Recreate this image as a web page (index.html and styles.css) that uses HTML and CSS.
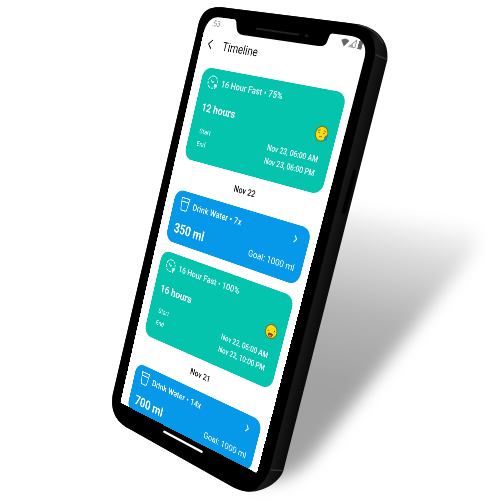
FILE: index.html
```html
<!DOCTYPE html>
<html lang="en">
<head>
<meta charset="utf-8">
<meta name="viewport" content="width=device-width, initial-scale=1">
<title>Timeline</title>
<link rel="stylesheet" href="styles.css">
</head>
<body>
<svg class="symbols" aria-hidden="true">
  <symbol id="fast" viewBox="0 0 24 24">
    <g fill="none" stroke="currentColor" stroke-width="1.8" stroke-linejoin="round">
      <path d="M12 1.500a10.500 10.500 0 0 1 10 13" stroke-dasharray="4 2"/>
      <path d="M12 1.500a10.500 10.500 0 1 0 3 20.500" stroke-dasharray="6 2"/>
      <path d="M7 9l5 4 2-2M19.500 15v8M17 15v4h5v-4"/>
    </g>
  </symbol>
  <symbol id="cup" viewBox="0 0 24 26">
    <g fill="none" stroke="currentColor" stroke-width="1.8" stroke-linejoin="round">
      <path d="M2 1h20l-2.500 21q-.2 3-3 3h-9q-2.800 0-3-3zM3 8h18"/>
    </g>
  </symbol>
  <symbol id="next" viewBox="0 0 8 14">
    <path d="M1 1l5 6-5 6" fill="none" stroke="currentColor" stroke-width="2"/>
  </symbol>
</svg>
<main class="stage">
  <svg class="layer" viewBox="0 0 1500 1500" aria-hidden="true">
    <defs>
      <linearGradient id="shade" gradientUnits="userSpaceOnUse" x1="1100" y1="620" x2="1000" y2="1150">
        <stop offset="0" stop-color="#fcfcfc"/><stop offset=".2" stop-color="#dedede"/><stop offset=".6" stop-color="#b4b4b4"/><stop offset="1" stop-color="#a2a2a2"/>
      </linearGradient>
      <linearGradient id="side" gradientUnits="userSpaceOnUse" x1="940" y1="740" x2="1010" y2="758">
        <stop offset="0" stop-color="#050505"/><stop offset=".4" stop-color="#1c1c1c"/><stop offset="1" stop-color="#0c0c0c"/>
      </linearGradient>
      <filter id="soft" x="-30%" y="-30%" width="160%" height="160%"><feGaussianBlur stdDeviation="24"/></filter>
    </defs>
    <path d="M980 620L1400 680Q1460 690 1410 770L930 1380Q850 1460 760 1440z" fill="url(#shade)" filter="url(#soft)"/>
    <path d="M420 1270L740 1450L800 1430L720 1300z" fill="#dedede" filter="url(#soft)"/>
    <path d="M592 90C600 45 615 18 665 22L1070 72C1130 82 1168 120 1162 180L852 1405C844 1445 790 1478 745 1475Q725 1474 700 1462L385 1285C355 1268 330 1240 338 1185z" fill="url(#side)"/>
    <path d="M1072 74Q1130 88 1148 130M1127 164L1160 178M812 1410L850 1412" fill="none" stroke="#333" stroke-width="4"/>
    <path d="M1060 508l10 4-34 130-12-3z" fill="#000"/>
  </svg>

  <section class="screen">
    <div class="status">
      <span>:53</span>
      <svg class="signals" viewBox="0 0 46 16" aria-hidden="true">
        <path d="M0 4Q8-2 16 4L8 14z" fill="#666"/>
        <path d="M30 1v12H18z" fill="none" stroke="#888" stroke-width="1.500"/><path d="M24 8l3 5h-9z" fill="#aaa"/>
        <path d="M35 2h2V0h4v2h2v13h-8z" fill="#666"/>
      </svg>
    </div>
    <header class="bar">
      <button class="back" aria-label="Back">
        <svg viewBox="0 0 10 18" aria-hidden="true"><path d="M9 1L1 9l8 8" fill="none" stroke="currentColor" stroke-width="2"/></svg>
      </button>
      <h1>Timeline</h1>
    </header>

    <div class="feed">
      <article class="card fast">
        <h2><svg class="icon" aria-hidden="true"><use href="#fast"/></svg>16 Hour Fast • 75%</h2>
        <div class="amount">
          <strong>12 hours</strong>
          <svg class="face" viewBox="0 0 28 28" aria-hidden="true">
            <circle cx="14" cy="14" r="12.500" fill="#fbdc14" stroke="#6f7a1c" stroke-width="2"/>
            <path d="M6 10l4-2M18 8l4 2M7 13h3M17 13h3M11 20q3-2 6 0" fill="none" stroke="#7a6414" stroke-width="1.500"/>
            <path d="M24 15q-4 5-2 8 3 2 5-1 0-3-3-7z" fill="#248fd5" stroke="#31677b" stroke-width=".7"/>
          </svg>
        </div>
        <dl>
          <div><dt>Start</dt><dd>Nov 23, 06:00 AM</dd></div>
          <div><dt>End</dt><dd>Nov 23, 06:00 PM</dd></div>
        </dl>
      </article>

      <p class="day">Nov 22</p>

      <article class="card water">
        <h2><svg class="icon" aria-hidden="true"><use href="#cup"/></svg>Drink Water • 7x<svg class="next" aria-hidden="true"><use href="#next"/></svg></h2>
        <div class="amount"><strong>350 ml</strong><span>Goal: 1000 ml</span></div>
      </article>

      <article class="card fast">
        <h2><svg class="icon" aria-hidden="true"><use href="#fast"/></svg>16 Hour Fast • 100%</h2>
        <div class="amount">
          <strong>16 hours</strong>
          <svg class="face" viewBox="0 0 28 28" aria-hidden="true">
            <circle cx="14" cy="14" r="12.500" fill="#fbdc14" stroke="#6f7a1c" stroke-width="2"/>
            <circle cx="7" cy="14" r="1.200" fill="#4d3b0c"/><circle cx="21" cy="12" r="1.200" fill="#4d3b0c"/>
            <path d="M8 18q6-2 12 0-1 7-6 7t-6-7z" fill="#8d4a22"/><path d="M11 22q3-3 6 0-3 3-6 0z" fill="#f2897d"/>
          </svg>
        </div>
        <dl>
          <div><dt>Start</dt><dd>Nov 22, 06:00 AM</dd></div>
          <div><dt>End</dt><dd>Nov 22, 10:00 PM</dd></div>
        </dl>
      </article>

      <p class="day">Nov 21</p>

      <article class="card water">
        <h2><svg class="icon" aria-hidden="true"><use href="#cup"/></svg>Drink Water • 14x<svg class="next" aria-hidden="true"><use href="#next"/></svg></h2>
        <div class="amount"><strong>700 ml</strong><span>Goal: 1000 ml</span></div>
      </article>
    </div>
  </section>

  <svg class="layer" viewBox="0 0 1500 1500" aria-hidden="true">
    <!-- front glass with the screen opening and notch -->
    <path fill="#000" fill-rule="evenodd" d="M592 90C600 45 615 18 665 22L1050 70C1105 80 1133 120 1124 170L812 1400C800 1445 765 1475 740 1474Q725 1474 700 1462L385 1285C355 1268 330 1240 338 1185z
      M602 135C608 100 620 50 655 52L700 57Q709 58 709 68L710 84Q711 102 728 105L955 138Q974 140 980 128L988 108Q991 99 1002 101L1050 107C1090 112 1101 140 1094 172L776 1410Q773 1421 763 1416L368 1214Q360 1210 362 1200z"/>
    <path d="M770 86L895 104" stroke="#222" stroke-width="5" stroke-linecap="round"/>
    <circle cx="920" cy="107" r="5" fill="#1b1b1f"/>
    <path d="M493 1295L605 1355" stroke="#fff" stroke-width="7" stroke-linecap="round"/>
  </svg>
</main>
</body>
</html>
```
FILE: styles.css
```css
* {
  box-sizing: border-box;
  margin: 0;
}

body {
  background: #fff;
  font-family: Roboto, "Liberation Sans", sans-serif;
}

.symbols {
  position: absolute;
  width: 0;
  height: 0;
}

.stage {
  position: relative;
  width: 500px;
  aspect-ratio: 1;
  margin: 0 auto;
  overflow: hidden;
}

.layer {
  position: absolute;
  inset: 0;
  width: 100%;
  height: 100%;
  pointer-events: none;
}

/* The flat app screen, seen in the phone's perspective. */
.screen {
  position: absolute;
  top: 0;
  left: 0;
  width: 360px;
  height: 780px;
  overflow: hidden;
  background: #fff;
  color: #111;
  transform-origin: 0 0;
  transform: matrix3d(0.32481, 0.050722, 0, -0.00034361, -0.097974, 0.542077, 0, 0.00011276, 0, 0, 1, 0, 207.3, 15.3, 0, 1);
}

.status {
  display: flex;
  align-items: center;
  justify-content: space-between;
  height: 26px;
  padding: 0 8px 0 16px;
  color: #777;
  font-size: 15px;
}

.signals {
  width: 46px;
  height: 16px;
}

.bar {
  display: flex;
  align-items: center;
  gap: 26px;
  height: 50px;
  padding: 0 18px;
}

.back {
  display: flex;
  padding: 0;
  border: 0;
  background: none;
  color: inherit;
}

.back svg {
  width: 10px;
  height: 18px;
}

h1 {
  font-size: 22px;
  font-weight: 400;
}

.feed {
  display: flex;
  flex-direction: column;
  gap: 20px;
  padding: 17px 16px 0 21px;
}

.card {
  padding: 12px 16px 14px;
  border-radius: 20px;
  color: #fff;
}

.fast {
  background: #04c4ae;
}

.water {
  background: #0698e9;
}

.card h2 {
  display: flex;
  align-items: center;
  gap: 8px;
  font-size: 17px;
  font-weight: 500;
  line-height: 24px;
}

.icon {
  width: 26px;
  height: 26px;
}

.next {
  width: 8px;
  height: 14px;
  margin: 0 8px 0 auto;
}

.amount {
  display: flex;
  align-items: center;
  justify-content: space-between;
  margin-top: 22px;
  font-size: 17px;
  line-height: 28px;
}

.amount strong {
  font-size: 21px;
  font-weight: 700;
}

.water .amount strong {
  font-size: 25px;
}

.face {
  width: 28px;
  height: 28px;
}

dl {
  padding: 18px 8px 7px;
  line-height: 24px;
}

dl div {
  display: flex;
  justify-content: space-between;
}

dt {
  font-size: 13px;
}

dd {
  font-size: 14px;
  font-weight: 500;
}

.day {
  color: #111;
  font-size: 16px;
  font-weight: 500;
  line-height: 20px;
  text-align: center;
}
```
